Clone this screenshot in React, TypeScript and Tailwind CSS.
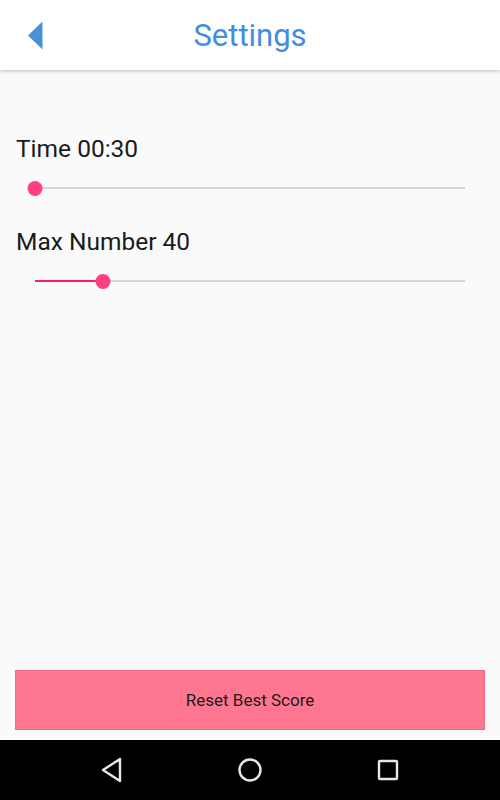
import React from "react";

function Slider({ percent }: { percent: number }) {
  return (
    <div className="mx-[35px] h-[30px] relative flex items-center">
      <div className="h-[2px] w-full bg-[#d6d6d6]" />
      <div
        className="absolute left-0 h-[2px] bg-[#ff1a72]"
        style={{ width: `${percent}%` }}
      />
      <div
        className="absolute h-[15px] w-[15px] rounded-full bg-[#ff4081] -translate-x-1/2"
        style={{ left: `${percent}%` }}
      />
    </div>
  );
}

export default function App() {
  return (
    <div
      className="w-[500px] h-[800px] flex flex-col bg-[#fafafa]"
      style={{ fontFamily: "Roboto, 'Noto Sans', sans-serif" }}
    >
      <header className="h-[70px] bg-white grid grid-cols-[1fr_auto_1fr] items-center shadow-[0_1px_4px_rgba(0,0,0,0.25)] relative z-10">
        <div className="pl-[28px] flex items-center">
          <svg width="15" height="29" viewBox="0 0 15 29">
            <polygon points="14.5,0.5 0,14.5 14.5,28.5" fill="#4a90d9" />
          </svg>
        </div>
        <div className="text-[31px] leading-[36px] text-[#3f8edf] pt-[2px]">Settings</div>
        <div />
      </header>

      <main className="flex-1 flex flex-col">
        <div className="mt-[65px] pl-[16px] text-[24.5px] leading-[28px] text-[#1a1a1a]">Time 00:30</div>
        <div className="mt-[10px]">
          <Slider percent={0} />
        </div>
        <div className="mt-[25px] pl-[16px] text-[24.5px] leading-[28px] text-[#1a1a1a]">Max Number 40</div>
        <div className="mt-[10px]">
          <Slider percent={15.8} />
        </div>
        <div className="flex-1" />
        <button className="mx-[15px] mb-[10px] h-[60px] bg-[#ff7691] border border-[#f26b88] text-[17px] text-[#1a1a1a] flex items-center justify-center pt-[2px]">
          Reset Best Score
        </button>
      </main>

      <nav className="h-[60px] bg-black flex items-center justify-center">
        <div className="w-[138px] flex justify-center">
          <svg width="24" height="26" viewBox="0 0 24 26">
            <polygon points="20,2 20,24 3,13" fill="none" stroke="#e8e8e8" strokeWidth="2.4" strokeLinejoin="round" />
          </svg>
        </div>
        <div className="w-[138px] flex justify-center">
          <svg width="26" height="26" viewBox="0 0 26 26">
            <circle cx="13" cy="13" r="10.5" fill="none" stroke="#e8e8e8" strokeWidth="2.4" />
          </svg>
        </div>
        <div className="w-[138px] flex justify-center">
          <svg width="22" height="22" viewBox="0 0 22 22">
            <rect x="2" y="2" width="18" height="18" rx="1" fill="none" stroke="#e8e8e8" strokeWidth="2.4" />
          </svg>
        </div>
      </nav>
    </div>
  );
}
